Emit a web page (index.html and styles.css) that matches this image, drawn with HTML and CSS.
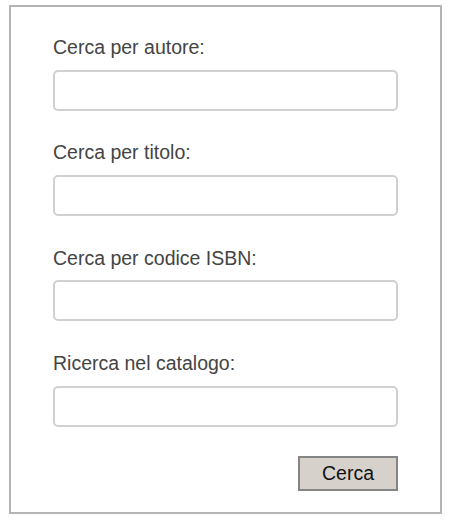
FILE: index.html
```html
<!DOCTYPE html>
<html lang="it">
<head>
<meta charset="utf-8">
<title>Ricerca</title>
<link rel="stylesheet" href="styles.css">
</head>
<body>
<form class="search-box">
  <div class="field">
    <label class="field-label" for="autore">Cerca per autore:</label>
    <input class="field-input" id="autore" type="text">
  </div>
  <div class="field">
    <label class="field-label" for="titolo">Cerca per titolo:</label>
    <input class="field-input" id="titolo" type="text">
  </div>
  <div class="field">
    <label class="field-label" for="isbn">Cerca per codice ISBN:</label>
    <input class="field-input" id="isbn" type="text">
  </div>
  <div class="field">
    <label class="field-label" for="catalogo">Ricerca nel catalogo:</label>
    <input class="field-input" id="catalogo" type="text">
  </div>
  <div class="actions">
    <button class="submit-btn" type="button">Cerca</button>
  </div>
</form>
</body>
</html>
```
FILE: styles.css
```css
html, body {
  margin: 0;
  padding: 0;
  background: #ffffff;
}

body {
  font-family: "Liberation Sans", Arial, sans-serif;
}

.search-box {
  box-sizing: border-box;
  width: 433px;
  height: 509px;
  margin: 5px 0 0 9px;
  border: 2px solid #b4b4b4;
  padding: 28px 42px 0 42px;
  display: flex;
  flex-direction: column;
}

.field {
  display: flex;
  flex-direction: column;
  margin-bottom: 29.6px;
}

.field-label {
  font-size: 19.5px;
  line-height: 24px;
  color: #444444;
  margin-bottom: 10.7px;
}

.field-input {
  box-sizing: border-box;
  width: 345px;
  height: 41px;
  margin: 0;
  border: 2px solid #d0d0d0;
  border-radius: 5px;
  background: #ffffff;
  font-size: 16px;
  padding: 0 8px;
}

.actions {
  display: flex;
  justify-content: flex-end;
  margin-top: -0.6px;
}

.submit-btn {
  box-sizing: border-box;
  width: 100px;
  height: 35px;
  margin: 0;
  padding: 0;
  border: 2px solid #858585;
  border-radius: 0;
  background: #d6d2cb;
  color: #111111;
  font-family: "Liberation Sans", Arial, sans-serif;
  font-size: 19.5px;
  line-height: 31px;
}
```
